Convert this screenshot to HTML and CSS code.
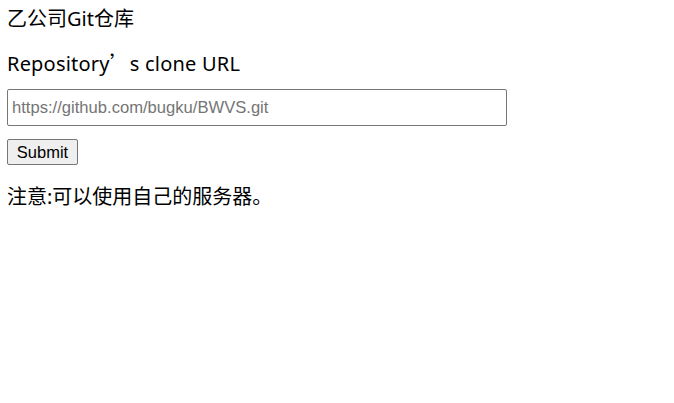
FILE: index.html
```html
<!DOCTYPE html>
<html>
<head>
<meta charset="utf-8">
<link rel="stylesheet" href="styles.css">
</head>
<body>
<div class="page">
  <div class="title">乙公司Git仓库</div>
  <form class="form">
    <div class="label">Repository<span class="apos">’</span>s clone URL</div>
    <input class="url" type="text" placeholder="https://github.com/bugku/BWVS.git">
    <div class="actions"><button class="submit" type="button">Submit</button></div>
  </form>
  <div class="note">注意:可以使用自己的服务器。</div>
</div>
</body>
</html>
```
FILE: styles.css
```css
html, body {
  margin: 0;
  padding: 0;
  background: #fff;
}
.page {
  padding: 8px 7px;
  font-family: "Noto Sans", "Noto Sans CJK SC", sans-serif;
  font-size: 20px;
  color: #000;
}
.title {
  height: 22px;
  line-height: 22px;
}
.form {
  display: flex;
  flex-direction: column;
  align-items: flex-start;
  margin: 0;
}
.label {
  margin-top: 22px;
  height: 24px;
  line-height: 24px;
  letter-spacing: 0.2px;
}
.apos {
  font-family: "Noto Sans CJK SC", sans-serif;
  line-height: 1;
}
.url {
  margin-top: 13px;
  box-sizing: border-box;
  width: 500px;
  height: 37px;
  border: 1px solid #767676;
  border-radius: 2px;
  padding: 0 4px;
  font-family: "Liberation Sans", Arial, sans-serif;
  font-size: 16.6px;
  color: #000;
  outline: none;
}
.url::placeholder {
  color: #757575;
}
.actions {
  display: flex;
  margin-top: 13px;
}
.submit {
  box-sizing: border-box;
  height: 26px;
  width: 71px;
  padding: 0;
  font-family: "Liberation Sans", Arial, sans-serif;
  font-size: 16.5px;
  color: #000;
  background: #efefef;
  border: 1px solid #767676;
  border-radius: 2px;
}
.note {
  margin-top: 20px;
  height: 24px;
  line-height: 24px;
}
```
